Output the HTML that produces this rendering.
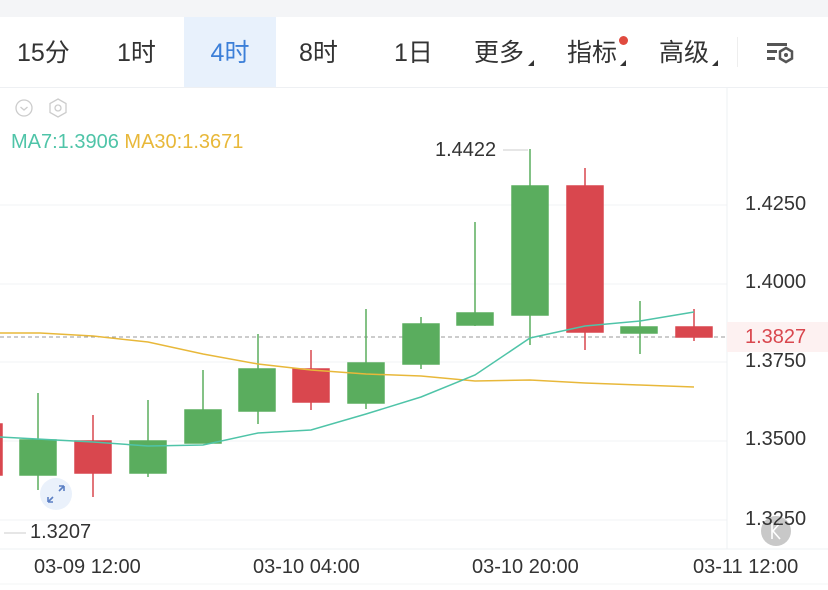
<!DOCTYPE html><html><head><meta charset="utf-8"><style>
body{margin:0;width:828px;height:590px;overflow:hidden;background:#fff;font-family:"Liberation Sans","Noto Sans CJK SC",sans-serif;position:relative}
.top{position:absolute;left:0;top:0;width:828px;height:17px;background:#f4f5f7}
.tabs{position:absolute;top:17px;left:0;width:828px;height:70px;border-bottom:1px solid #eef0f3}
.t{position:absolute;top:0;height:70px;line-height:72px;font-size:25px;color:#333}
.sel{background:#e8f1fc;color:#3c7fd8}
.tri{position:absolute;width:0;height:0;border-left:6px solid transparent;border-bottom:6px solid #333}
.ax{position:absolute;font-size:20px;color:#333;white-space:nowrap}
</style></head><body>
<div class="top"></div>
<div class="tabs">
<div class="t" style="left:17px">15分</div>
<div class="t" style="left:117px">1时</div>
<div class="t sel" style="left:184px;width:92px;text-align:center">4时</div>
<div class="t" style="left:299px">8时</div>
<div class="t" style="left:394px">1日</div>
<div class="t" style="left:474px">更多</div><div class="tri" style="left:528px;top:43px"></div>
<div class="t" style="left:567px">指标</div><div class="tri" style="left:620px;top:43px"></div>
<div style="position:absolute;left:619px;top:19px;width:9px;height:9px;border-radius:50%;background:#e04a3f"></div>
<div class="t" style="left:659px">高级</div><div class="tri" style="left:712px;top:43px"></div>
<div style="position:absolute;left:737px;top:20px;width:1px;height:30px;background:#eee"></div>
<svg style="position:absolute;left:766px;top:25px" width="30" height="24"><rect x="1" y="1" width="20" height="3" fill="#555"/><rect x="1" y="8" width="10" height="3" fill="#555"/><rect x="1" y="15" width="8" height="3" fill="#555"/><polygon points="20,6 26,9.5 26,16.5 20,20 14,16.5 14,9.5" fill="none" stroke="#555" stroke-width="2.5"/><circle cx="20" cy="13" r="2" fill="#555"/></svg>
</div>
<svg style="position:absolute;left:0;top:0" width="828" height="590">
<g stroke="#f2f3f5" stroke-width="1"><line x1="0" y1="205" x2="727" y2="205"/><line x1="0" y1="284" x2="727" y2="284"/><line x1="0" y1="362" x2="727" y2="362"/><line x1="0" y1="441" x2="727" y2="441"/><line x1="0" y1="520" x2="727" y2="520"/></g>
<line x1="727" y1="88" x2="727" y2="549" stroke="#eef0f3"/>
<line x1="0" y1="549" x2="828" y2="549" stroke="#eef0f3"/>
<line x1="0" y1="584" x2="828" y2="584" stroke="#f3f4f6"/>
<circle cx="24" cy="108" r="8" fill="none" stroke="#ccc" stroke-width="1.3"/><path d="M20.5 107l3.5 3 3.5-3" fill="none" stroke="#ccc" stroke-width="1.3"/>
<polygon points="58,99 66,103.5 66,112.5 58,117 50,112.5 50,103.5" fill="none" stroke="#ccc" stroke-width="1.3"/><circle cx="58" cy="108" r="3" fill="none" stroke="#ccc" stroke-width="1.3"/>
<line x1="0" y1="337" x2="727" y2="337" stroke="#999" stroke-dasharray="4,3"/>
<rect x="727" y="322" width="101" height="30" fill="#fdf1f1"/>
<g stroke-width="1.5">
<g fill="#5aad5e" stroke="#5aad5e">
<line x1="38" y1="393" x2="38" y2="490"/><rect x="20" y="440" width="36" height="35"/>
<line x1="148" y1="400" x2="148" y2="477"/><rect x="130" y="441" width="36" height="32"/>
<line x1="203" y1="370" x2="203" y2="443"/><rect x="185" y="410" width="36" height="33"/>
<line x1="258" y1="334" x2="258" y2="424"/><rect x="239" y="369" width="36" height="42"/>
<line x1="366" y1="309" x2="366" y2="409"/><rect x="348" y="363" width="36" height="40"/>
<line x1="421" y1="317" x2="421" y2="369"/><rect x="403" y="324" width="36" height="40"/>
<line x1="475" y1="222" x2="475" y2="326"/><rect x="457" y="313" width="36" height="12"/>
<line x1="530" y1="149" x2="530" y2="345"/><rect x="512" y="186" width="36" height="129"/>
<line x1="640" y1="301" x2="640" y2="354"/><rect x="621" y="327" width="36" height="6"/>
</g>
<g fill="#d9474e" stroke="#d9474e">
<rect x="-30" y="424" width="32" height="51"/>
<line x1="93" y1="415" x2="93" y2="497"/><rect x="75" y="441" width="36" height="32"/>
<line x1="311" y1="350" x2="311" y2="410"/><rect x="293" y="369" width="36" height="33"/>
<line x1="585" y1="168" x2="585" y2="350"/><rect x="567" y="186" width="36" height="146"/>
<line x1="694" y1="309" x2="694" y2="341"/><rect x="676" y="327" width="36" height="10"/>
</g></g>
<polyline fill="none" stroke="#e8b83a" stroke-width="1.5" points="0,333 40,333 93,336 148,342 203,354 258,364 311,370 366,374 421,376 475,381 530,380 585,383 640,385 694,387"/>
<polyline fill="none" stroke="#4fc4a8" stroke-width="1.5" points="0,437 93,442 148,446 203,445 258,433 311,430 366,414 421,397 475,375 530,338 585,326 640,321 694,312"/>
<line x1="503" y1="150" x2="528" y2="150" stroke="#ccc"/>
<line x1="4" y1="533" x2="26" y2="533" stroke="#ccc"/>
<circle cx="56" cy="494" r="16" fill="#eaf1fb"/><path d="M48 502l5-5M48 502v-5M48 502h5M64 486l-5 5M64 486v5M64 486h-5" stroke="#5b7fc4" stroke-width="1.6" fill="none"/>
<circle cx="776" cy="531" r="15" fill="#c8c8c8"/><path d="M772 523v16M780 523l-7 8 7 8" stroke="#fff" stroke-width="1.6" fill="none"/>
</svg>
<div class="ax" style="left:11px;top:131px;color:#4fc4a8">MA7:1.3906 <span style="color:#e8b83a">MA30:1.3671</span></div>
<div class="ax" style="left:435px;top:139px">1.4422</div>
<div class="ax" style="left:30px;top:521px">1.3207</div>
<div class="ax" style="left:745px;top:193px">1.4250</div>
<div class="ax" style="left:745px;top:271px">1.4000</div>
<div class="ax" style="left:745px;top:326px;color:#d9474e">1.3827</div>
<div class="ax" style="left:745px;top:350px">1.3750</div>
<div class="ax" style="left:745px;top:428px">1.3500</div>
<div class="ax" style="left:745px;top:508px">1.3250</div>
<div class="ax" style="left:34px;top:556px">03-09 12:00</div>
<div class="ax" style="left:253px;top:556px">03-10 04:00</div>
<div class="ax" style="left:472px;top:556px">03-10 20:00</div>
<div class="ax" style="left:693px;top:556px">03-11 12:00</div>
</body></html>
